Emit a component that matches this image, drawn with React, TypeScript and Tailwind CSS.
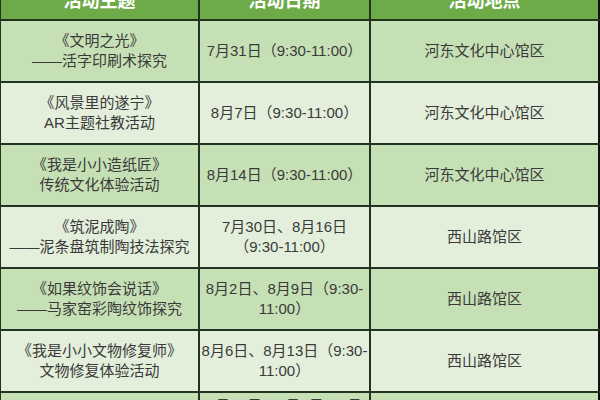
import React from 'react';

type Row = {
  theme: React.ReactNode;
  date: React.ReactNode;
  place: string;
};

const rows: Row[] = [
  {
    theme: (
      <>
        《文明之光》
        <br />
        ——活字印刷术探究
      </>
    ),
    date: '7月31日（9:30-11:00）',
    place: '河东文化中心馆区',
  },
  {
    theme: (
      <>
        《风景里的遂宁》
        <br />
        AR主题社教活动
      </>
    ),
    date: '8月7日（9:30-11:00）',
    place: '河东文化中心馆区',
  },
  {
    theme: (
      <>
        《我是小小造纸匠》
        <br />
        传统文化体验活动
      </>
    ),
    date: '8月14日（9:30-11:00）',
    place: '河东文化中心馆区',
  },
  {
    theme: (
      <>
        《筑泥成陶》
        <br />
        ——泥条盘筑制陶技法探究
      </>
    ),
    date: (
      <>
        7月30日、8月16日
        <br />
        （9:30-11:00）
      </>
    ),
    place: '西山路馆区',
  },
  {
    theme: (
      <>
        《如果纹饰会说话》
        <br />
        ——马家窑彩陶纹饰探究
      </>
    ),
    date: (
      <>
        8月2日、8月9日（9:30-
        <br />
        11:00）
      </>
    ),
    place: '西山路馆区',
  },
  {
    theme: (
      <>
        《我是小小文物修复师》
        <br />
        文物修复体验活动
      </>
    ),
    date: (
      <>
        8月6日、8月13日（9:30-
        <br />
        11:00）
      </>
    ),
    place: '西山路馆区',
  },
  {
    theme: (
      <>
        《陶艺小课堂》
        <br />
        陶艺体验活动
      </>
    ),
    date: (
      <>
        7月23日、8月3日、8月
        <br />
        20日（9:30-11:00）
      </>
    ),
    place: '西山路馆区',
  },
];

export default function App() {
  return (
    <div
      className="w-[600px] h-[400px] overflow-hidden bg-white text-[#3a3a3a]"
      style={{ fontFamily: '"Liberation Sans", "Noto Sans CJK SC", sans-serif' }}
    >
      <div className="-mt-[17px]">
        {/* Header */}
        <div className="grid grid-cols-[199px_171px_1fr] h-[38px] border-l border-b-2 border-[#223322] bg-[#6dab49] text-white font-bold text-[18px]">
          <div className="flex items-center justify-center border-r-2 border-[#223322]">活动主题</div>
          <div className="flex items-center justify-center border-r-2 border-[#223322]">活动日期</div>
          <div className="flex items-center justify-center border-r-2 border-[#111]">活动地点</div>
        </div>

        {/* Body */}
        {rows.map((row, i) => (
          <div
            key={i}
            className={`grid grid-cols-[199px_171px_1fr] h-[62px] border-l border-b-2 border-[#223322] text-[15px] leading-[20px] text-center ${
              i % 2 === 0 ? 'bg-[#c6e0b5]' : 'bg-[#e3efdb]'
            }`}
          >
            <div className="flex items-center justify-center border-r-2 border-[#223322] whitespace-nowrap">
              <p>{row.theme}</p>
            </div>
            <div
              className={`flex justify-center border-r-2 border-[#223322] whitespace-nowrap ${
                i === 6 ? 'items-start pt-[3px]' : 'items-center'
              }`}
            >
              <p>{row.date}</p>
            </div>
            <div className="flex items-center justify-center border-r-2 border-[#111]">
              <p>{row.place}</p>
            </div>
          </div>
        ))}
      </div>
    </div>
  );
}
